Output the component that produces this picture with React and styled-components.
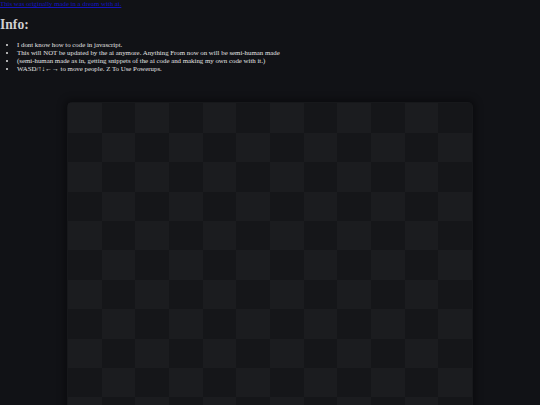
import React from "react";
import styled, { createGlobalStyle } from "styled-components";

const Global = createGlobalStyle`
  html, body { margin: 0; padding: 0; background: #111216; }
  body {
    font-family: "Liberation Serif", "Times New Roman", serif;
    color: #e2e2e2;
    font-size: 6.85px;
    overflow: hidden;
  }
`;

const Page = styled.div`
  width: 540px;
  height: 405px;
  overflow: hidden;
`;

const TopLink = styled.a`
  display: block;
  color: #1414c0;
  text-decoration: underline;
  font-size: 6.8px;
  line-height: 7.8px;
`;

const Title = styled.h1`
  font-size: 13.6px;
  line-height: 15.5px;
  font-weight: bold;
  color: #cfcfcf;
  margin: 9px 0;
`;

const List = styled.ul`
  margin: 9px 0 0;
  padding-left: 17px;
  list-style: disc;
  line-height: 7.8px;
`;

const Item = styled.li`
  font-size: 6.85px;
  &::marker { font-size: 8px; }
`;

const BoardWrap = styled.div`
  display: flex;
  justify-content: center;
  margin-top: 30px;
`;

const Board = styled.div`
  width: 404px;
  padding: 1px;
  border-radius: 5px 5px 0 0;
  background: #17181b;
  box-shadow: 0 0 7px 3px rgba(0, 0, 0, 0.35);
  display: grid;
  grid-template-columns: repeat(12, 1fr);
  grid-auto-rows: 29.4px;
  overflow: hidden;
`;

const Cell = styled.div`
  background: ${(p) => (p.$light ? "#1b1c1f" : "#151619")};
`;

const items = [
  "I dont know how to code in javascript.",
  "This will NOT be updated by the ai anymore. Anything From now on will be semi-human made",
  "(semi-human made as in, getting snippets of the ai code and making my own code with it.)",
  "WASD/\u2191\u2193\u2190\u2192 to move people. Z To Use Powerups.",
];

export default function App() {
  const cells = [];
  for (let r = 0; r < 12; r++) {
    for (let c = 0; c < 12; c++) {
      cells.push(<Cell key={`${r}-${c}`} $light={(r + c) % 2 === 0} />);
    }
  }
  return (
    <Page>
      <Global />
      <TopLink href="#">This was originally made in a dream with ai.</TopLink>
      <Title>Info:</Title>
      <List>
        {items.map((t) => (
          <Item key={t}>{t}</Item>
        ))}
      </List>
      <BoardWrap>
        <Board>{cells}</Board>
      </BoardWrap>
    </Page>
  );
}
